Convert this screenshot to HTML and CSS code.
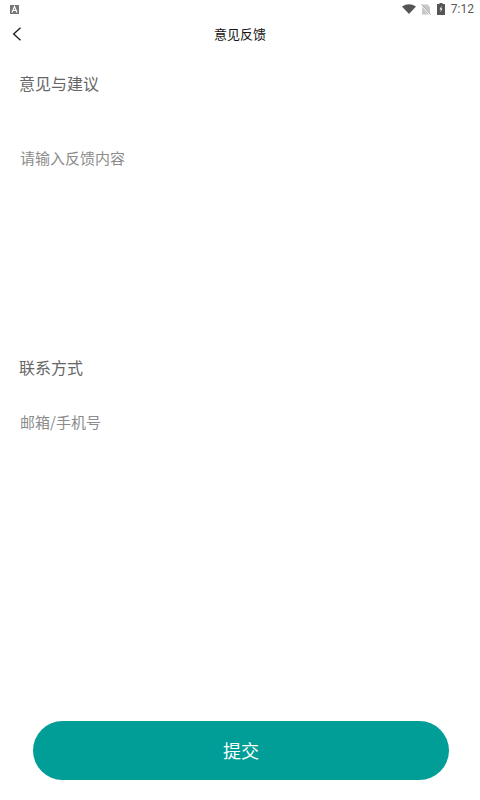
FILE: index.html
```html
<!doctype html>
<html lang="zh">
<head>
    <meta charset="UTF-8">
    <title>意见反馈</title>
    <link rel="stylesheet" href="styles.css">
</head>
<body>
<div class="page">
    <div class="status">
        <svg class="ic-a" width="9" height="9" viewBox="0 0 9 9">
            <rect width="9" height="9" fill="#777"/>
            <path d="M2 7.5 L4.5 1.5 L7 7.5 M3 5.5 H6" stroke="#fff" stroke-width="1.2" fill="none"/>
        </svg>
        <div class="status-right">
            <svg class="ic-wifi" width="14" height="10" viewBox="0 0 14 10"><path d="M0 2.5 Q7 -2 14 2.5 L7 10 Z" fill="#555"/></svg>
            <svg width="10" height="11" viewBox="0 0 10 11">
                <path d="M1 0.5 H6.5 L9 3 V10.5 H1 Z" fill="#c8c8c8"/>
                <path d="M0.2 0.6 L9.2 10.8" stroke="#fff" stroke-width="1.4"/>
                <path d="M0.6 0.4 L9.6 10.6" stroke="#8e8e8e" stroke-width="0.8"/>
            </svg>
            <svg class="ic-bat" width="8" height="12" viewBox="0 0 8 12">
                <path d="M2.5 0 H5.5 V1 H8 V12 H0 V1 H2.5 Z" fill="#555"/>
                <path d="M4.6 2.6 L2.6 6.4 H3.9 L3.4 9.4 L5.4 5.6 H4.1 Z" fill="#fff"/>
            </svg>
            <span class="clock">7:12</span>
        </div>
    </div>
    <div class="nav">
        <svg class="back" width="10" height="14" viewBox="0 0 10 14"><path d="M8.5 0.7 L1.7 7 L8.5 13.3" stroke="#222" stroke-width="1.4" fill="none"/></svg>
        <h1 class="nav-title">意见反馈</h1>
    </div>
    <div class="form">
        <div class="label">意见与建议</div>
        <div class="hint hint-a">请输入反馈内容</div>
        <div class="label label-b">联系方式</div>
        <div class="hint hint-b">邮箱/手机号</div>
    </div>
    <a class="submit" href="#">提交</a>
</div>
</body>
</html>
```

FILE: styles.css
```css
* {
    margin: 0;
    padding: 0;
    box-sizing: border-box;
}

html, body {
    width: 480px;
    height: 800px;
    overflow: hidden;
    background: #fff;
}

body {
    font-family: "Noto Sans CJK SC", "Noto Sans", sans-serif;
}

.page {
    height: 800px;
    display: flex;
    flex-direction: column;
}

.status {
    height: 18px;
    padding: 0 6px 0 10px;
    display: flex;
    align-items: center;
    justify-content: space-between;
}

.status-right {
    display: flex;
    align-items: center;
    gap: 6px;
}

.ic-wifi {
    margin-right: -1px;
}

.clock {
    font-family: Roboto, sans-serif;
    font-size: 12px;
    color: #5a5a5a;
}

.nav {
    height: 32px;
    position: relative;
    display: flex;
    align-items: center;
    justify-content: center;
}

.back {
    position: absolute;
    left: 12px;
    top: 9px;
}

.nav-title {
    font-size: 13px;
    font-weight: 400;
    color: #111;
    margin-bottom: 2px;
}

.form {
    flex: 1;
    padding: 0 20px 0 19px;
}

.label {
    margin-top: 22px;
    font-size: 16px;
    line-height: 22px;
    color: #666;
}

.label-b {
    margin-top: 188px;
}

.hint {
    padding-left: 1px;
    font-size: 15px;
    line-height: 20px;
    color: #8c8c8c;
}

.hint-a {
    margin-top: 54px;
}

.hint-b {
    margin-top: 34px;
}

.submit {
    display: block;
    width: 416px;
    height: 59px;
    margin: 0 0 20px 33px;
    border-radius: 30px;
    background: #009e96;
    color: #fff;
    font-size: 18px;
    line-height: 59px;
    text-align: center;
    text-decoration: none;
}
```
